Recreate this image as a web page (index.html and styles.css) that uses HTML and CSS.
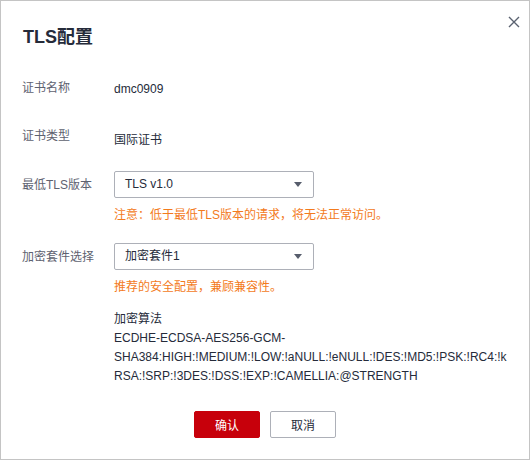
FILE: index.html
```html
<!DOCTYPE html>
<html lang="zh-CN">
<head>
<meta charset="utf-8">
<title>TLS配置</title>
<link rel="stylesheet" href="styles.css">
</head>
<body>
<div class="dialog">
  <button class="close" aria-label="关闭">
    <svg width="12" height="12" viewBox="0 0 12 12"><path d="M1 1L11 11M11 1L1 11" stroke="#5a6270" stroke-width="1.4" fill="none"/></svg>
  </button>
  <h1 class="title">TLS配置</h1>
  <div class="form">
    <div class="row row-name">
      <div class="label">证书名称</div>
      <div class="value">dmc0909</div>
    </div>
    <div class="row row-type">
      <div class="label">证书类型</div>
      <div class="value value-low">国际证书</div>
    </div>
    <div class="row row-select">
      <div class="label">最低TLS版本</div>
      <div class="field">
        <div class="select"><span>TLS v1.0</span><i class="caret"></i></div>
        <div class="note">注意：低于最低TLS版本的请求，将无法正常访问。</div>
      </div>
    </div>
    <div class="row row-select row-suite">
      <div class="label">加密套件选择</div>
      <div class="field">
        <div class="select"><span>加密套件1</span><i class="caret"></i></div>
        <div class="note">推荐的安全配置，兼顾兼容性。</div>
      </div>
    </div>
    <div class="algo">
      <div class="algo-title">加密算法</div>
      <div class="algo-line">ECDHE-ECDSA-AES256-GCM-</div>
      <div class="algo-line">SHA384:HIGH:!MEDIUM:!LOW:!aNULL:!eNULL:!DES:!MD5:!PSK:!RC4:!k</div>
      <div class="algo-line">RSA:!SRP:!3DES:!DSS:!EXP:!CAMELLIA:@STRENGTH</div>
    </div>
  </div>
  <div class="actions">
    <button class="btn btn-primary">确认</button>
    <button class="btn btn-default">取消</button>
  </div>
</div>
</body>
</html>
```
FILE: styles.css
```css
* { box-sizing: border-box; }
html, body { margin: 0; padding: 0; background: #fff; }
body {
  font-family: "Liberation Sans", Arial, "Noto Sans CJK SC", sans-serif;
  font-size: 12px;
  color: #252b3a;
}
.dialog {
  position: relative;
  width: 530px;
  height: 460px;
  border: 1px solid #c4c4c4;
  background: #fff;
  padding: 24px 0 0 0;
}
.close {
  position: absolute;
  top: 15px;
  right: 9px;
  width: 12px;
  height: 12px;
  padding: 0;
  border: 0;
  background: none;
  display: block;
}
.close svg { display: block; }
.title {
  margin: 0 0 0 22px;
  font-size: 18px;
  line-height: 24px;
  font-weight: bold;
  color: #252b3a;
}
.form { padding-left: 21px; }
.row {
  display: grid;
  grid-template-columns: 92px 1fr;
  line-height: 20px;
}
.label { color: #5e6270; }
.row-name { margin-top: 29px; }
.row-name .value { margin-top: 1px; }
.row-type { margin-top: 27px; }
.value-low { margin-top: 4px; }
.row-select { margin-top: 21px; align-items: start; }
.row-select .label { margin-top: 4px; }
.row-suite { margin-top: 18px; }
.select {
  width: 200px;
  height: 27px;
  border: 1px solid #adb0b8;
  border-radius: 2px;
  display: flex;
  align-items: center;
  justify-content: space-between;
  padding: 0 11px 0 10px;
  line-height: 25px;
  color: #252b3a;
}
.caret {
  width: 0;
  height: 0;
  border-left: 4px solid transparent;
  border-right: 4px solid transparent;
  border-top: 5px solid #575d6c;
}
.note {
  margin-top: 7px;
  color: #f37b1d;
  line-height: 20px;
}
.algo {
  margin: 13px 0 0 92px;
  line-height: 19px;
  color: #252b3a;
  white-space: nowrap;
}
.actions {
  display: flex;
  justify-content: center;
  gap: 10px;
  margin-top: 25px;
}
.btn {
  width: 66px;
  height: 27px;
  border-radius: 2px;
  font-family: "Liberation Sans", Arial, "Noto Sans CJK SC", sans-serif;
  font-size: 12px;
  padding: 0;
}
.btn-primary {
  background: #c7000b;
  border: 1px solid #c7000b;
  color: #fff;
}
.btn-default {
  background: #fff;
  border: 1px solid #adb0b8;
  color: #252b3a;
}
```
